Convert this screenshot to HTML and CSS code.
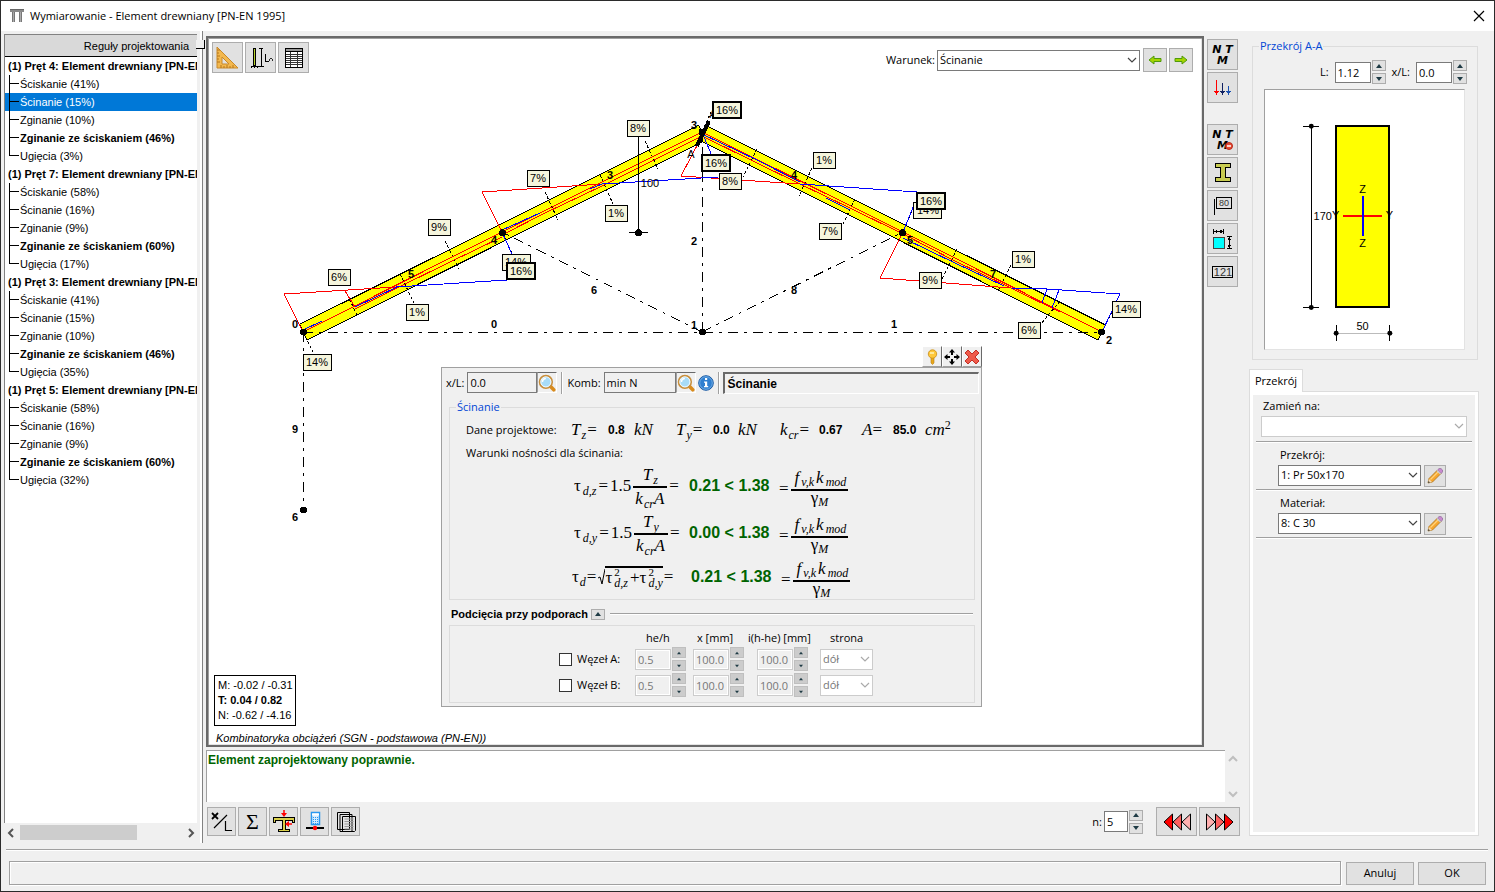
FILE: index.html
```html
<!DOCTYPE html>
<html lang="pl">
<head>
<meta charset="utf-8">
<title>Wymiarowanie - Element drewniany [PN-EN 1995]</title>
<link rel="stylesheet" href="styles.css">
</head>
<body>
<svg class="defs" aria-hidden="true">
  <symbol id="i-chev" viewBox="0 0 10 6"><path d="M1 1l4 4 4-4" fill="none" stroke="currentColor" stroke-width="1.2"/></symbol>
  <symbol id="i-lens" viewBox="0 0 16 16">
    <path d="M10.500 10.500l3.500 3.500" stroke="#d98b1c" stroke-width="3.200" stroke-linecap="round"/>
    <circle cx="7" cy="7" r="5.600" fill="#a8dcf8" stroke="#c98f3c" stroke-width="1.500"/>
    <circle cx="7" cy="7" r="4.500" fill="none" stroke="#fff" stroke-width=".8"/>
    <path d="M4 7c0-2 1.500-3 3-3" stroke="#fff" stroke-width="1.300" fill="none"/>
  </symbol>
  <symbol id="i-pencil" viewBox="0 0 16 16">
    <path d="M1 15l1-4.500L10.500 2l3.500 3.500L5.500 14z" fill="#f7a52c" stroke="#a8731e" stroke-width=".8"/>
    <path d="M3.500 11.500L12 3" stroke="#ffd27a" stroke-width="1.300"/>
    <path d="M10.500 2L12 .600h2L15.500 2v2L14 5.500z" fill="#c98ad0" stroke="#8d6a9a" stroke-width=".7"/>
    <path d="M9.500 3l3.500 3.500 1-1L10.500 2z" fill="#c5cbd0"/>
    <path d="M1 15l1-4 3 3z" fill="#f4dbb5"/><path d="M1 15l.5-2L3 14.500z" fill="#333"/>
  </symbol>
  <symbol id="i-up" viewBox="0 0 8 6"><path d="M1 5h6L4 1z" fill="#1f3b45"/></symbol>
  <symbol id="i-dn" viewBox="0 0 8 6"><path d="M1 1h6L4 5z" fill="#1f3b45"/></symbol>
</svg>

<div class="window">
  <header class="titlebar">
    <svg class="app-icon" viewBox="0 0 16 16" width="16" height="16"><path d="M1 1h14v3H1z" fill="#8a8a8a"/><path d="M1 1h14v1H1z" fill="#666"/><path d="M3 4h3v10H3zM10 4h3v10h-3z" fill="#777"/><path d="M4 4h1v10H4zM11 4h1v10h-1z" fill="#aaa"/></svg>
    <h1 class="title">Wymiarowanie - Element drewniany [PN-EN 1995]</h1>
    <button class="close" aria-label="Zamknij"><svg viewBox="0 0 12 12" width="12" height="12"><path d="M1 1l10 10M11 1L1 11" stroke="#000" stroke-width="1.200"/></svg></button>
  </header>

  <main class="main">
    <aside class="sidebar">
      <div class="tree">
        <div class="tree-head">Reguły projektowania</div>
        <section class="branch">
          <h2>(1) Pręt 4: Element drewniany [PN-EN 1995]</h2>
          <ul><li>Ściskanie (41%)</li><li class="selected">Ścinanie (15%)</li><li>Zginanie (10%)</li><li class="strong">Zginanie ze ściskaniem (46%)</li><li>Ugięcia (3%)</li></ul>
        </section>
        <section class="branch">
          <h2>(1) Pręt 7: Element drewniany [PN-EN 1995]</h2>
          <ul><li>Ściskanie (58%)</li><li>Ścinanie (16%)</li><li>Zginanie (9%)</li><li class="strong">Zginanie ze ściskaniem (60%)</li><li>Ugięcia (17%)</li></ul>
        </section>
        <section class="branch">
          <h2>(1) Pręt 3: Element drewniany [PN-EN 1995]</h2>
          <ul><li>Ściskanie (41%)</li><li>Ścinanie (15%)</li><li>Zginanie (10%)</li><li class="strong">Zginanie ze ściskaniem (46%)</li><li>Ugięcia (35%)</li></ul>
        </section>
        <section class="branch">
          <h2>(1) Pręt 5: Element drewniany [PN-EN 1995]</h2>
          <ul><li>Ściskanie (58%)</li><li>Ścinanie (16%)</li><li>Zginanie (9%)</li><li class="strong">Zginanie ze ściskaniem (60%)</li><li>Ugięcia (32%)</li></ul>
        </section>
      </div>
      <div class="hscroll">
        <svg viewBox="0 0 8 10" width="8" height="10"><path d="M6 1L2 5l4 4" fill="none" stroke="#555" stroke-width="2"/></svg>
        <div class="track"><div class="thumb"></div></div>
        <svg viewBox="0 0 8 10" width="8" height="10"><path d="M2 1l4 4-4 4" fill="none" stroke="#555" stroke-width="2"/></svg>
      </div>
    </aside>
    <div class="splitter"><span class="grip"></span></div>

    <div class="center">
      <div class="work">
        <div class="canvas">
          <svg class="drawing" viewBox="208 38 994 707" preserveAspectRatio="xMinYMin meet">
            <g class="beams">
              <path d="M299.500 324.400L698.500 125.400L706.500 139.600L307 340z"/>
              <path d="M706 125.400L1105.500 325L1098 340L698.500 139.600z"/>
            </g>
            <g class="axis">
              <path d="M303 332H1102M303 332V510M702 332V132M702 332L502 232M702 332L903 232"/>
            </g>
            <g class="ticks">
              <path d="M345 290l13 27M445 241l14 28M400 274l14 29M502 232l14 30M303 332l10 20M545 192l13 28M600 175l13 29M645 141l13 28M757 149l-14 28M812 168l-13 28M855 199l-13 27M957 249l-15 30M1011 265l-13 26M1060 301l-20 24M1102 332l10-20M702 132l9-20M903 232l10-24"/>
            </g>
            <g class="red">
              <path d="M303 332L284 294L396 287M345 291l10 16M303 332L502 232L702 132L903 232L1102 332M355 309L397 288L450 262L502 237"/>
              <path d="M502 232L482 192L602 184M502 235L545 213L602 186L650 162L702 136"/>
              <path d="M702 136L681 176L800 184M702 136L757 163L800 184L850 208L903 234"/>
              <path d="M903 232L880 278L1011 288M903 234L955 261L1011 288L1060 312"/>
            </g>
            <g class="blue">
              <path d="M396 287L507 280M502 232L512 254M303 330L322 321M355 307L397 287"/>
              <path d="M602 184L718 177M702 132L712 156M502 230L540 213M590 189L602 184"/>
              <path d="M800 184L917 192M903 232L914 205M702 134L757 160L800 182M826 198L850 210"/>
              <path d="M1011 288L1047 289L1120 294L1102 332M1047 289l-5 14M1059 290l-7 18M903 238L955 263L1004 286"/>
            </g>
            <g class="cut"><path d="M697 146L709 121" stroke-width="4"/></g>
            <g class="dim"><path d="M638.500 137V232M629 232.500H648"/><circle cx="638.500" cy="232.500" r="3.500"/></g>
            <g class="nodes"><circle cx="303.500" cy="332" r="3.500"/><circle cx="303.500" cy="510" r="3.500"/><circle cx="502.500" cy="232.500" r="3.500"/><circle cx="702.500" cy="332" r="3.500"/><circle cx="702" cy="132" r="3.500"/><circle cx="902.500" cy="232.500" r="3.500"/><circle cx="1101.500" cy="332" r="3.500"/></g>
            <g class="plain"><text x="650" y="187">100</text><text x="691" y="158">A</text><text x="713" y="118">A</text></g>
            <g class="numbers">
              <text x="295" y="328">0</text><text x="494" y="328">0</text><text x="694" y="329">1</text><text x="894" y="328">1</text><text x="694" y="245">2</text><text x="694" y="129">3</text><text x="494" y="244">4</text><text x="411" y="278">5</text><text x="610" y="179">3</text><text x="794" y="179">4</text><text x="910" y="244">5</text><text x="993" y="278">7</text><text x="594" y="294">6</text><text x="794" y="294">8</text><text x="295" y="433">9</text><text x="295" y="521">6</text><text x="1109" y="344">2</text>
            </g>
            <g class="tags">
              <rect x="328" y="269" width="22" height="16"/><text x="339" y="281">6%</text>
              <rect x="428" y="219" width="22" height="16"/><text x="439" y="231">9%</text>
              <rect x="406" y="304" width="22" height="16"/><text x="417" y="316">1%</text>
              <rect x="303" y="354" width="28" height="16"/><text x="317" y="366">14%</text>
              <rect x="527" y="170" width="22" height="16"/><text x="538" y="182">7%</text>
              <rect x="627" y="120" width="22" height="16"/><text x="638" y="132">8%</text>
              <rect x="605" y="205" width="22" height="16"/><text x="616" y="217">1%</text>
              <rect x="502" y="254" width="28" height="16"/><text x="516" y="266">14%</text>
              <rect x="719" y="173" width="22" height="16"/><text x="730" y="185">8%</text>
              <rect x="813" y="152" width="22" height="16"/><text x="824" y="164">1%</text>
              <rect x="819" y="223" width="22" height="16"/><text x="830" y="235">7%</text>
              <rect x="913" y="202" width="28" height="16"/><text x="928" y="214">14%</text>
              <rect x="919" y="272" width="22" height="16"/><text x="930" y="284">9%</text>
              <rect x="1012" y="251" width="22" height="16"/><text x="1023" y="263">1%</text>
              <rect x="1018" y="322" width="22" height="16"/><text x="1029" y="334">6%</text>
              <rect x="1112" y="301" width="28" height="16"/><text x="1126" y="313">14%</text>
            </g>
            <g class="tags heavy">
              <rect x="507" y="263" width="28" height="16"/><text x="521" y="275">16%</text>
              <rect x="702" y="155" width="28" height="16"/><text x="716" y="167">16%</text>
              <rect x="713" y="102" width="28" height="16"/><text x="727" y="114">16%</text>
              <rect x="917" y="193" width="28" height="16"/><text x="931" y="205">16%</text>
            </g>
          </svg>

          <div class="tools-view">
            <button class="tool" aria-label="Wymiary"><svg viewBox="0 0 24 24" width="24" height="24"><path d="M1 1v21h21z" fill="#f3b84e" stroke="#c8892a"/><path d="M6 11v7h7z" fill="#e1e1e1" stroke="#c8892a"/><path d="M1 4h3M1 7h2M1 10h3M1 13h2M1 16h3M5 22v-3M8 22v-2M11 22v-3M14 22v-2M17 22v-3" stroke="#b5761c"/></svg></button>
            <button class="tool" aria-label="Długości wyboczeniowe"><svg viewBox="0 0 24 24" width="24" height="24" shape-rendering="crispEdges"><rect x="4.500" y="2.500" width="2" height="17" fill="#b9d32f" stroke="#000"/><path d="M2 20.500h8M2 22l1-1M5 22l1-1M8 22l1-1M10 2.500h4M12.500 2v18M10 20.500h5" stroke="#000" fill="none"/><path d="M16.500 8v7h3" stroke="#000" fill="none"/><path d="M22 12l1.500 1.500L22 15l-1.500-1.500z" fill="none" stroke="#000" stroke-width=".8"/></svg></button>
            <button class="tool" aria-label="Tabela"><svg viewBox="0 0 24 24" width="24" height="24" shape-rendering="crispEdges"><rect x="3" y="2" width="18" height="20" fill="#000"/><path d="M4 3h16v2H4z" fill="#999"/><path d="M4 6h16v15H4z" fill="#fff"/><path d="M4 8.500h16M4 10.500h16M4 12.500h16M4 14.500h16M4 16.500h16M4 18.500h16M8.500 6v15M15.500 6v15" stroke="#333"/></svg></button>
          </div>

          <div class="condition">
            <label for="warunek">Warunek:</label>
            <span class="select wide"><select id="warunek"><option>Ścinanie</option></select><svg><use href="#i-chev"/></svg></span>
            <button class="nav" aria-label="Poprzedni"><svg viewBox="0 0 14 10" width="14" height="10"><path d="M1 5l5-4v2.500h7v3H6V9z" fill="#a4d400" stroke="#4f9a0a"/></svg></button>
            <button class="nav" aria-label="Następny"><svg viewBox="0 0 14 10" width="14" height="10"><path d="M13 5L8 1v2.500H1v3h7V9z" fill="#a4d400" stroke="#4f9a0a"/></svg></button>
          </div>

          <div class="forces"><p>M: -0.02 / -0.31</p><p><b>T: 0.04 / 0.82</b></p><p>N: -0.62 / -4.16</p></div>
          <p class="caption">Kombinatoryka obciążeń (SGN - podstawowa (PN-EN))</p>

          <div class="popup">
            <div class="popup-btns">
              <button aria-label="Przypnij"><svg viewBox="0 0 16 16" width="16" height="16"><path d="M7 8h3v6l-1.500 1.500L7 14z" fill="#e8a81c" stroke="#b97d12" stroke-width=".6"/><circle cx="8.500" cy="5" r="4.200" fill="#ffc83a" stroke="#c98b14" stroke-width=".8"/><path d="M6 4h4" stroke="#fff3b8" stroke-width="1.500"/></svg></button>
              <button aria-label="Przesuń"><svg viewBox="0 0 16 16" width="16" height="16"><path d="M8 0l3 3.500H9V6H7V3.500H5zM8 16l3-3.500H9V10H7v2.500H5zM0 8l3.500-3v2H6v2H3.500v2zM16 8l-3.500-3v2H10v2h2.500v2z"/></svg></button>
              <button aria-label="Zamknij panel"><svg viewBox="0 0 16 16" width="16" height="16"><path d="M4 1l4 4 4-4 3 3-4 4 4 4-3 3-4-4-4 4-3-3 4-4-4-4z" fill="#ee5a4a" stroke="#c22f25"/></svg></button>
            </div>
            <div class="panel">
              <div class="panel-top">
                <label for="xl">x/L:</label><input id="xl" class="sunk w-xl" value="0.0" readonly><button class="lens" aria-label="Szukaj x/L"><svg width="18" height="18"><use href="#i-lens"/></svg></button>
                <span class="vline"></span>
                <label for="komb">Komb:</label><input id="komb" class="sunk w-komb" value="min N" readonly><button class="lens" aria-label="Szukaj kombinacji"><svg width="18" height="18"><use href="#i-lens"/></svg></button>
                <button class="info" aria-label="Informacja"><svg viewBox="0 0 16 16" width="16" height="16"><circle cx="8" cy="8" r="7.300" fill="#2f7fd0" stroke="#1d5ca4"/><circle cx="8" cy="8" r="6.300" fill="none" stroke="#8fc0ee" stroke-width=".7"/><path d="M7 3h2.200v2H7zM6 6.500h3.200V11h1v1.200H6V11h1V7.700H6z" fill="#fff"/></svg></button>
                <span class="vline"></span>
                <output class="state">Ścinanie</output>
              </div>

              <fieldset class="group calc">
                <legend>Ścinanie</legend>
                <div class="data-row">
                  <span>Dane projektowe:</span>
                  <span class="m"><i>T</i><sub>z</sub>=</span><b>0.8</b><span class="m"><i>kN</i></span>
                  <span class="m"><i>T</i><sub>y</sub>=</span><b>0.0</b><span class="m"><i>kN</i></span>
                  <span class="m"><i>k</i><sub>cr</sub>=</span><b>0.67</b>
                  <span class="m"><i>A</i>=</span><b>85.0</b><span class="m"><i>cm</i><sup>2</sup></span>
                </div>
                <p class="cond-title">Warunki nośności dla ścinania:</p>
                <div class="formula">
                  <span class="m lhs">τ<sub>d,z</sub>=<span>1.5</span><span class="frac"><span><i>T</i><sub>z</sub></span><span><i>k</i><sub>cr</sub><i>A</i></span></span>=</span>
                  <b class="result">0.21 &lt; 1.38</b>
                  <span class="m rhs">=<span class="frac"><span><i>f</i><sub>v,k</sub><i>k</i><sub>mod</sub></span><span>γ<sub>M</sub></span></span></span>
                </div>
                <div class="formula">
                  <span class="m lhs">τ<sub>d,y</sub>=<span>1.5</span><span class="frac"><span><i>T</i><sub>y</sub></span><span><i>k</i><sub>cr</sub><i>A</i></span></span>=</span>
                  <b class="result">0.00 &lt; 1.38</b>
                  <span class="m rhs">=<span class="frac"><span><i>f</i><sub>v,k</sub><i>k</i><sub>mod</sub></span><span>γ<sub>M</sub></span></span></span>
                </div>
                <div class="formula last">
                  <span class="m lhs">τ<sub>d</sub>=<svg class="radical" viewBox="0 0 8 18" width="8" height="18"><path d="M1 10l2-1 2 7 3-15" fill="none" stroke="#000"/></svg><span class="root">τ<span class="ss"><span>2</span><span>d,z</span></span>+τ<span class="ss"><span>2</span><span>d,y</span></span></span>=</span>
                  <b class="result">0.21 &lt; 1.38</b>
                  <span class="m rhs">=<span class="frac"><span><i>f</i><sub>v,k</sub><i>k</i><sub>mod</sub></span><span>γ<sub>M</sub></span></span></span>
                </div>
              </fieldset>

              <div class="divider"><b>Podcięcia przy podporach</b><button class="fold" aria-label="Zwiń"><svg width="8" height="6"><use href="#i-up"/></svg></button><span class="rule"></span></div>

              <div class="notches">
                <span></span><span>he/h</span><span>x [mm]</span><span>i(h-he) [mm]</span><span>strona</span>
                <label class="check"><input type="checkbox">Węzeł A:</label>
                <span class="num off"><input aria-label="he/h A" value="0.5" disabled><span class="spin"><button disabled aria-label="Więcej"><svg><use href="#i-up"/></svg></button><button disabled aria-label="Mniej"><svg><use href="#i-dn"/></svg></button></span></span>
                <span class="num off"><input aria-label="x A" value="100.0" disabled><span class="spin"><button disabled aria-label="Więcej"><svg><use href="#i-up"/></svg></button><button disabled aria-label="Mniej"><svg><use href="#i-dn"/></svg></button></span></span>
                <span class="num off"><input aria-label="i(h-he) A" value="100.0" disabled><span class="spin"><button disabled aria-label="Więcej"><svg><use href="#i-up"/></svg></button><button disabled aria-label="Mniej"><svg><use href="#i-dn"/></svg></button></span></span>
                <span class="select off side"><select aria-label="strona A" disabled><option>dół</option></select><svg><use href="#i-chev"/></svg></span>
                <label class="check"><input type="checkbox">Węzeł B:</label>
                <span class="num off"><input aria-label="he/h B" value="0.5" disabled><span class="spin"><button disabled aria-label="Więcej"><svg><use href="#i-up"/></svg></button><button disabled aria-label="Mniej"><svg><use href="#i-dn"/></svg></button></span></span>
                <span class="num off"><input aria-label="x B" value="100.0" disabled><span class="spin"><button disabled aria-label="Więcej"><svg><use href="#i-up"/></svg></button><button disabled aria-label="Mniej"><svg><use href="#i-dn"/></svg></button></span></span>
                <span class="num off"><input aria-label="i(h-he) B" value="100.0" disabled><span class="spin"><button disabled aria-label="Więcej"><svg><use href="#i-up"/></svg></button><button disabled aria-label="Mniej"><svg><use href="#i-dn"/></svg></button></span></span>
                <span class="select off side"><select aria-label="strona B" disabled><option>dół</option></select><svg><use href="#i-chev"/></svg></span>
              </div>
            </div>
          </div>
        </div>

        <nav class="side-tools">
          <button class="tool" aria-label="Siły przekrojowe"><span class="ntm"><span>N T</span><span>M</span></span></button>
          <button class="tool" aria-label="Obciążenia"><svg viewBox="0 0 20 20" width="20" height="20" shape-rendering="crispEdges"><path d="M3.500 2v13" stroke="#f00"/><path d="M1 13h5l-2.500 4z" fill="#f00"/><path d="M9.500 5v10" stroke="#102060"/><path d="M7 13h5l-2.500 4z" fill="#102060"/><path d="M15.500 8v7" stroke="#1a50b0"/><path d="M13 13h5l-2.500 4z" fill="#1a50b0"/></svg></button>
          <button class="tool apart" aria-label="Ukryj siły"><span class="ntm"><span>N T</span><span>M</span></span><svg class="minus" viewBox="0 0 8 8" width="8" height="8"><circle cx="4" cy="4" r="3.500" fill="#e84b35" stroke="#b52a1b"/><path d="M2 4h4" stroke="#fff" stroke-width="1.500"/></svg></button>
          <button class="tool" aria-label="Przekroje"><svg viewBox="0 0 20 20" width="20" height="20"><path d="M2.500 .500h15v4h-5v10h5v4h-15v-4h5v-10h-5z" fill="#c8cc50" stroke="#000" shape-rendering="crispEdges"/></svg></button>
          <button class="tool" aria-label="Opisy"><svg viewBox="0 0 20 20" width="20" height="20"><path d="M1.500 3v16M3.500 1.500h15v11h-15z" fill="none" stroke="#000" shape-rendering="crispEdges"/><text x="11" y="10" font-size="9" text-anchor="middle">80</text></svg></button>
          <button class="tool" aria-label="Wymiary przekroju"><svg viewBox="0 0 20 20" width="20" height="20" shape-rendering="crispEdges"><rect x=".5" y="8.500" width="11" height="11" fill="#0ff" stroke="#444"/><path d="M.5 0v5M10.500 0v5M1 2.500h9M14 7.500h5M14 19.500h5M16.500 8v11" stroke="#000"/><path d="M1 2.500l3-2v4zM10 2.500l-3-2v4zM16.500 8l-2 3h4zM16.500 19l-2-3h4z"/></svg></button>
          <button class="tool" aria-label="Numeracja"><svg viewBox="0 0 22 14" width="22" height="14"><rect x=".5" y="1.500" width="20" height="11" fill="none" stroke="#000" shape-rendering="crispEdges"/><text x="11" y="11" font-size="11" text-anchor="middle">121</text></svg></button>
        </nav>
      </div>

      <div class="log">
        <div class="log-text">Element zaprojektowany poprawnie.</div>
        <div class="vscroll"><svg viewBox="0 0 10 8" width="10" height="8"><path d="M1 6l4-4 4 4" fill="none" stroke="#bfbfbf" stroke-width="2"/></svg><svg viewBox="0 0 10 8" width="10" height="8"><path d="M1 2l4 4 4-4" fill="none" stroke="#bfbfbf" stroke-width="2"/></svg></div>
      </div>

      <div class="bottom-tools">
        <button class="tool small" aria-label="x/L"><svg viewBox="0 0 24 24" width="24" height="24"><path d="M2 3l6 6M8 3L2 9" stroke="#000" stroke-width="1.800"/><path d="M4 18L17 5M15.500 11v9.500H22" fill="none" stroke="#000" stroke-width="1.200"/></svg></button>
        <button class="tool small" aria-label="Suma"><span class="sigma">Σ</span></button>
        <button class="tool small" aria-label="Belka"><svg viewBox="0 0 24 24" width="24" height="24"><path d="M1.500 7.500h21v5h-2v-2h-7v9h4v2h-11v-2h4v-9h-7v2h-2z" fill="#d8cf4a" stroke="#000" shape-rendering="crispEdges"/><path d="M12 0v5M20 14h-5" stroke="#f00" stroke-width="1.500"/><path d="M9 3h6l-3 4zM17 11v6l-4-3z" fill="#f00"/></svg></button>
        <button class="tool small" aria-label="Kalkulator"><svg viewBox="0 0 24 24" width="24" height="24"><rect x="8.500" y="2.500" width="8" height="12" fill="#d5ecff" stroke="#2a98f0" stroke-width="1.500"/><path d="M9 4.500h7" stroke="#fff" stroke-width="2"/><path d="M10.500 7v7M12.500 7v7M14.500 7v7" stroke="#2a98f0" stroke-dasharray="1 1"/><path d="M3 18h18" stroke="#000" stroke-width="2"/><circle cx="12" cy="18" r="2.200" fill="#f00"/></svg></button>
        <button class="tool small" aria-label="Kopie"><svg viewBox="0 0 24 24" width="24" height="24"><path d="M3.500 2.500h12v17h-12zM6 4.500h12v17H6zM8.500 6.500h13v14l-1 1h-12z" fill="#e4e4e4" stroke="#000"/><path d="M10.500 9h9M10.500 11.500h9M10.500 14h9M10.500 16.500h9M10.500 19h9" stroke="#999"/></svg></button>
        <span class="grow"></span>
        <label for="n">n:</label>
        <span class="num n"><input id="n" value="5"><span class="spin"><button aria-label="Więcej"><svg><use href="#i-up"/></svg></button><button aria-label="Mniej"><svg><use href="#i-dn"/></svg></button></span></span>
        <button class="tool small run" aria-label="Wstecz"><svg viewBox="0 0 28 18" width="28" height="18" stroke="#000"><path d="M9.500 1v16L1 9z" fill="#f00"/><path d="M18.500 1v16L10 9z" fill="#ff6060"/><path d="M27.500 1v16L19 9z" fill="#ffb0b0"/></svg></button>
        <button class="tool small run" aria-label="Dalej"><svg viewBox="0 0 28 18" width="28" height="18" stroke="#000"><path d="M.500 1v16L9 9z" fill="#ffb0b0"/><path d="M9.500 1v16L18 9z" fill="#ff6060"/><path d="M18.500 1v16L27 9z" fill="#f00"/></svg></button>
      </div>
    </div>

    <aside class="props">
      <fieldset class="group section-box">
        <legend>Przekrój A-A</legend>
        <div class="position">
          <label for="len">L:</label>
          <span class="num"><input id="len" value="1.12"><span class="spin"><button aria-label="Więcej"><svg><use href="#i-up"/></svg></button><button aria-label="Mniej"><svg><use href="#i-dn"/></svg></button></span></span>
          <label for="rel">x/L:</label>
          <span class="num"><input id="rel" value="0.0"><span class="spin"><button aria-label="Więcej"><svg><use href="#i-up"/></svg></button><button aria-label="Mniej"><svg><use href="#i-dn"/></svg></button></span></span>
        </div>
        <svg class="section-view" viewBox="1265 90 200 260">
          <g shape-rendering="crispEdges">
            <rect x="1336" y="126" width="54" height="182" fill="#ff0" stroke="#000" stroke-width="2"/>
            <path d="M1311.500 126V308M1303 126.500H1319M1303 308.500H1319M1336.500 326V342M1390.500 326V342" stroke="#000"/>
            <path d="M1336 334.500H1390" stroke="#bbb"/>
            <path d="M1343 217H1383" stroke="#f00" stroke-width="2"/><path d="M1363 197V237" stroke="#00f" stroke-width="2"/>
          </g>
          <circle cx="1311.500" cy="126.500" r="2.500"/><circle cx="1311.500" cy="308.500" r="2.500"/><circle cx="1336.500" cy="334.500" r="2.500"/><circle cx="1390.500" cy="334.500" r="2.500"/>
          <g class="dim-text"><text x="1323" y="221">170</text><text x="1336" y="220">Y</text><text x="1390" y="220">Y</text><text x="1363" y="194">Z</text><text x="1363" y="248">Z</text><text x="1363" y="331">50</text></g>
        </svg>
      </fieldset>

      <div class="tabs">
        <button class="tab">Przekrój</button>
        <div class="tab-body">
          <div class="tab-page">
            <div class="field top"><label for="zam">Zamień na:</label><span class="select off full"><select id="zam" disabled><option></option></select><svg><use href="#i-chev"/></svg></span></div>
            <div class="field"><label for="prz">Przekrój:</label><div class="pick"><span class="select"><select id="prz"><option>1: Pr 50x170</option></select><svg><use href="#i-chev"/></svg></span><button class="edit" aria-label="Edytuj przekrój"><svg width="16" height="16"><use href="#i-pencil"/></svg></button></div></div>
            <div class="field"><label for="mat">Materiał:</label><div class="pick"><span class="select"><select id="mat"><option>8: C 30</option></select><svg><use href="#i-chev"/></svg></span><button class="edit" aria-label="Edytuj materiał"><svg width="16" height="16"><use href="#i-pencil"/></svg></button></div></div>
          </div>
        </div>
      </div>
    </aside>
  </main>

  <footer class="footer">
    <div class="status"></div>
    <button>Anuluj</button>
    <button>OK</button>
  </footer>
</div>
</body>
</html>
```

FILE: styles.css
```css
* { box-sizing: border-box; }
body { margin: 0; font: 11px/16px "Open Sans", "Noto Sans", sans-serif; color: #000; }
h1, h2, p, ul { margin: 0; padding: 0; font-weight: normal; font-size: inherit; }
ul { list-style: none; }
button, input, select { font: inherit; color: inherit; margin: 0; border-radius: 0; }
button { padding: 0; background: #e1e1e1; border: 1px solid #adadad; display: flex; align-items: center; justify-content: center; flex: none; }
svg { flex: none; display: block; }
.defs { position: absolute; width: 0; height: 0; }

.window { height: 100vh; border: 1px solid #2b2b2b; background: #f0f0f0; display: flex; flex-direction: column; overflow: hidden; }
.titlebar { height: 30px; flex: none; background: #fff; display: flex; align-items: center; padding: 0 9px 0 8px; gap: 5px; }
.title { flex: 1; }
.close { border: 0; background: none; }
.main { flex: 1; min-height: 0; display: flex; padding: 0 15px 0 3px; }

/* rule tree */
.sidebar { width: 193px; padding: 3px 0 9px; display: flex; flex-direction: column; gap: 2px; flex: none; }
.tree { flex: 1; min-height: 0; background: #fff; border: solid #828282; border-width: 1px 0 0 1px; overflow: hidden; font-family: "Liberation Sans", Arial, sans-serif; line-height: 18px; white-space: nowrap; }
.tree-head { height: 22px; line-height: 22px; background: #d9d9d9; border-bottom: 1px solid #000; text-align: right; padding-right: 8px; }
.branch h2 { font-weight: bold; padding-left: 3px; }
.branch li { padding-left: 15px; background: linear-gradient(#000, #000) 4px 0 / 1px 18px no-repeat, linear-gradient(#000, #000) 4px 8px / 10px 1px no-repeat; }
.branch li:last-child { background-size: 1px 9px, 10px 1px; }
.branch li.selected { background-color: #0078d7; color: #fff; }
.strong { font-weight: bold; }
.hscroll { height: 15px; display: flex; align-items: center; padding: 0 2px 0 3px; gap: 5px; }
.track { flex: 1; height: 15px; }
.thumb { width: 72%; height: 15px; background: #cdcdcd; }
.splitter { width: 3px; margin: 0 3px 6px; background: #fff; border-right: 1px solid #828282; position: relative; flex: none; }
.grip { position: absolute; left: -4px; top: 9px; width: 9px; height: 9px; background: #f0f0f0; border: solid #000; border-width: 0 1px 1px 0; }

/* work area */
.center { flex: 1; min-width: 0; padding: 5px 0 13px; display: flex; flex-direction: column; }
.work { flex: 1; min-height: 0; display: flex; gap: 3px; padding-right: 2px; }
.canvas { flex: 1; min-width: 0; position: relative; background: #fff; border: 2px solid #696969; box-shadow: inset 1px 1px #a0a0a0, inset -1px -1px #e3e3e3; }
.drawing { width: 100%; height: 100%; }
.drawing g { shape-rendering: crispEdges; }
.drawing text, .dim-text { font: 11px "Liberation Sans", Arial, sans-serif; text-anchor: middle; }
.drawing .numbers text { font-weight: bold; }
.beams path { fill: #ff0; stroke: #000; }
.axis path { fill: none; stroke: #000; stroke-dasharray: 10 6 3 6; }
.ticks path { fill: none; stroke: #000; stroke-dasharray: 3 2; }
.red path { fill: none; stroke: #f00; }
.blue path { fill: none; stroke: #00f; }
.cut path, .dim path { stroke: #000; }
.tags rect { fill: #f5f5dc; stroke: #000; }
.heavy rect { stroke-width: 2; }

.tool { width: 31px; height: 31px; border-color: #adadad; }
.small { width: 29px; height: 29px; }
.tools-view { position: absolute; left: 4px; top: 4px; display: flex; gap: 2px; }
.condition { position: absolute; right: 9px; top: 10px; display: flex; align-items: center; gap: 2px; }
.condition .wide { width: 203px; margin-right: 1px; }
.nav { width: 24px; height: 24px; }
.select { display: inline-grid; height: 21px; align-items: stretch; }
.select > * { grid-area: 1 / 1; }
.select select { appearance: none; width: 100%; height: 21px; background: #fff; border: 1px solid #7a7a7a; padding: 0 16px 0 2px; opacity: 1; }
.select svg { width: 10px; height: 6px; color: #444; justify-self: end; align-self: center; margin-right: 3px; pointer-events: none; }
.select.off select { border-color: #ccc; color: #777; }
.select.off svg { color: #aaa; }
.forces { position: absolute; left: 6px; bottom: 19px; background: #fff; border: 1px solid #000; padding: 2px 3px; font: 11px/15px "Liberation Sans", Arial, sans-serif; width: 82px; height: 51px; white-space: nowrap; }
.caption { position: absolute; left: 8px; bottom: -1px; font: italic 11px/16px "Liberation Sans", Arial, sans-serif; }

.side-tools { display: flex; flex-direction: column; gap: 2px; padding-top: 3px; flex: none; }
.side-tools .apart { margin-top: 19px; position: relative; }
.ntm { font: italic bold 11px/11px "DejaVu Sans", sans-serif; display: flex; flex-direction: column; align-items: center; }
.minus { position: absolute; right: 4px; bottom: 4px; }
.side-tools text { font-family: "Liberation Sans", Arial, sans-serif; fill: #333; }

.log { height: 52px; margin-top: 3px; display: flex; flex: none; }
.log-text { flex: 1; background: #fff; border: solid #a0a0a0; border-width: 1px 0 0 1px; padding: 1px; font: bold 12px/16px "Liberation Sans", Arial, sans-serif; color: #006400; }
.vscroll { width: 15px; display: flex; flex-direction: column; justify-content: space-between; align-items: center; padding: 5px 0 4px; }
.bottom-tools { margin-top: 5px; padding-left: 1px; display: flex; align-items: center; gap: 2px; flex: none; }
.grow { flex: 1; }
.sigma { font: 22px/24px "Liberation Serif", serif; }
.run { width: 41px; }
.num.n { margin-right: 11px; }
.num.n input { width: 24px; }

/* number boxes */
.num { display: inline-flex; align-items: center; gap: 1px; }
.num input { width: 36px; height: 21px; border: 1px solid #7a7a7a; padding: 0 2px; background: #fff; }
.spin { display: flex; flex-direction: column; gap: 2px; }
.spin button { width: 14px; height: 11px; }
.spin svg { width: 8px; height: 6px; }
.num.off input { border-color: #ccc; background: #f0f0f0; color: #777; box-shadow: inset 0 0 0 1px #fff; }
.off .spin button { background: #ccc; border-color: #bfbfbf; }
.off .spin svg { width: 6px; height: 4px; }

/* floating panel */
.popup { position: absolute; left: 233px; top: 308px; width: 541px; }
.popup-btns { display: flex; justify-content: flex-end; }
.popup-btns button { width: 20px; height: 21px; background: #f0f0f0; border-color: #fff #696969 #a0a0a0 #fff; }
.panel { background: #f0f0f0; border: 1px solid #a0a0a0; padding: 4px 6px 4px 7px; height: 340px; }
.panel-top { display: flex; align-items: center; margin: 0 -4px; height: 21px; }
.panel-top label { padding: 0 3px 0 1px; }
.sunk { height: 21px; border: 1px solid #7a7a7a; background: #f0f0f0; padding: 0 2px; }
.w-xl { width: 70px; }
.w-komb { width: 72px; }
.lens { width: 20px; height: 21px; background: #f0f0f0; border: solid; border-color: #696969 #fff #fff #a0a0a0; border-width: 1px; }
.info { border: 0; background: none; margin-left: 2px; }
.vline { width: 2px; height: 22px; border-left: 1px solid #a0a0a0; background: #fff; margin: 0 3px 0 4px; }
.state { flex: 1; height: 22px; font: bold 12px/21px "Liberation Sans", Arial, sans-serif; border: solid; border-width: 2px 1px 1px 2px; border-color: #696969 #fff #fff #696969; padding-left: 3px; }
.group { border: 1px solid #dcdcdc; margin: 0; min-width: 0; padding: 0; }
.group legend { color: #0046d5; padding: 0 1px; margin-left: 6px; line-height: 16px; }
.calc { margin-top: 6px; height: 201px; }
.data-row { display: grid; grid-template-columns: 105px 37px 26px 42px 37px 25px 42px 39px 43px 31px 32px 1fr; padding-left: 16px; height: 30px; align-items: center; }
.data-row b { font: bold 12px/16px "Liberation Sans", Arial, sans-serif; }
.data-row sub { margin-left: 1px; margin-right: 1px; }
.cond-title { padding: 0 0 1px 16px; }
.m { font: 17px/20px "Liberation Serif", "Times New Roman", serif; white-space: nowrap; }
.m sub, .m sup { font-size: 12px; line-height: 0; font-style: italic; }
.m sub { vertical-align: -4px; }
.m sup { font-style: normal; vertical-align: 6px; }
.formula { display: grid; grid-template-columns: 115px 90px 1fr; align-items: center; height: 47px; padding-left: 124px; }
.formula.last { height: 41px; padding-left: 122px; grid-template-columns: 119px 90px 1fr; }
.lhs, .rhs { display: flex; align-items: center; }
.lhs { gap: 2px; }
.last .lhs { gap: 1px; }
.lhs > sub { padding-top: 10px; }
.rhs { padding-top: 6px; gap: 2px; }
.frac { display: inline-flex; flex-direction: column; align-items: center; }
.frac > span { line-height: 22px; height: 22px; padding: 0 2px; }
.frac > span + span { border-top: 2px solid #000; width: 100%; text-align: center; }
.frac i { margin-right: 1px; }
.rhs .frac i { margin: 0 2px; }
.rhs .frac sub { vertical-align: -3px; }
.rhs .frac > span { line-height: 14px; height: 18px; }
.result { font: bold 16px/20px "Liberation Sans", Arial, sans-serif; color: #006400; }
.root { border-top: 2px solid #000; display: inline-flex; align-items: center; height: 22px; gap: 2px; margin-left: -1px; }
.ss { display: inline-flex; flex-direction: column; font-size: 12px; line-height: 11px; font-style: italic; }
.ss span:first-child { font-style: normal; font-size: 11px; }
.divider { display: flex; align-items: center; gap: 3px; height: 16px; margin: 6px 2px 0; }
.divider b { font: bold 11px/16px "Liberation Sans", Arial, sans-serif; }
.fold { width: 14px; height: 11px; }
.rule { flex: 1; border-top: 1px solid #a0a0a0; border-bottom: 1px solid #fff; margin-left: 2px; }
.notches { border: 1px solid #dcdcdc; margin-top: 3px; height: 78px; padding: 3px 0 0 109px; display: grid; grid-template-columns: 76px 58px 64px 63px 54px; grid-template-rows: 17px 26px 26px; align-items: center; align-content: start; text-align: left; }
.notches > span:nth-child(2) { padding-left: 11px; }
.notches > span:nth-child(3) { padding-left: 4px; }
.notches > span:nth-child(4) { margin-left: -9px; white-space: nowrap; }
.notches > span:nth-child(5) { padding-left: 10px; }
.check { display: flex; align-items: center; gap: 5px; }
.check input { appearance: none; width: 13px; height: 13px; border: 1px solid #333; background: #fff; }
.side { width: 53px; }

/* properties */
.props { width: 230px; margin-left: 9px; padding: 7px 0 13px; flex: none; display: flex; flex-direction: column; gap: 9px; }
.section-box { margin: 0 1px 0 3px; padding: 6px 12px 9px 11px; }
.section-box legend { margin-left: -5px; }
.position { display: flex; justify-content: flex-end; align-items: center; gap: 6px; margin-right: -2px; }
.section-view { width: 100%; margin-top: 5px; background: #fff; border: 1px solid #e3e3e3; border-color: #a0a0a0 #e3e3e3 #e3e3e3 #a0a0a0; }
.tabs { flex: 1; min-height: 0; display: flex; flex-direction: column; }
.tab { align-self: flex-start; width: 54px; height: 23px; background: #fff; border: 1px solid #dcdcdc; border-bottom: 0; margin-bottom: -1px; position: relative; }
.tab-body { flex: 1; background: #fff; border: 1px solid #dcdcdc; padding: 3px; }
.tab-page { height: 100%; background: #f0f0f0; padding: 3px; }
.field { border-bottom: 1px solid #a0a0a0; box-shadow: 0 1px #fff; padding: 5px 0 0 22px; display: flex; flex-direction: column; gap: 2px; height: 48px; }
.field label { padding-left: 2px; }
.field.top { padding: 0 5px; height: 44px; }
.pick { display: flex; gap: 3px; }
.pick .select { width: 143px; }
.edit { width: 22px; height: 22px; }

.footer { flex: none; margin: 0 6px 0 5px; border-top: 1px solid #a0a0a0; box-shadow: inset 0 1px #fff; padding: 11px 2px 6px 3px; display: flex; align-items: center; gap: 4px; }
.status { flex: 1; height: 24px; border: 1px solid #a0a0a0; box-shadow: inset 1px 1px #fff, 1px 1px #fff; margin-right: 1px; }
.footer button { width: 68px; height: 23px; }
```
